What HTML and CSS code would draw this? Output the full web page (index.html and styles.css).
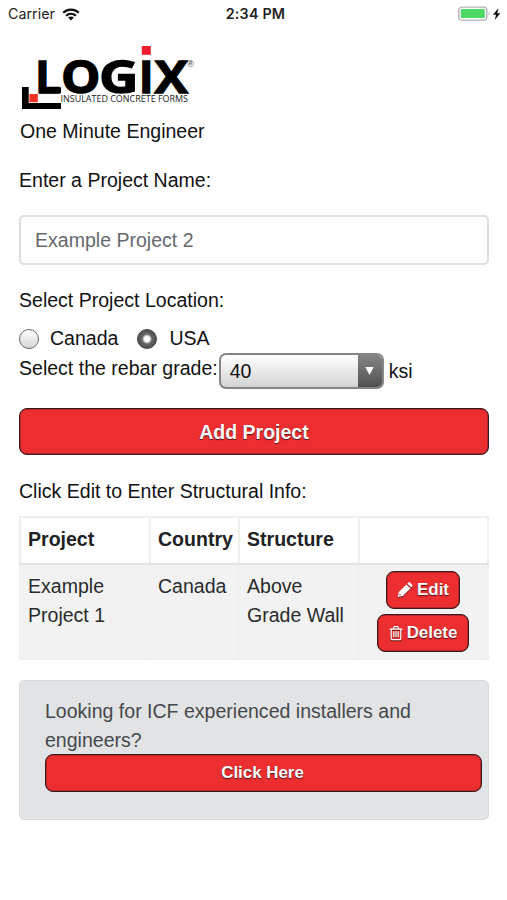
FILE: index.html
```html
<!DOCTYPE html>
<html lang="en">
<head>
<meta charset="utf-8">
<meta name="viewport" content="width=device-width">
<title>One Minute Engineer</title>
<link rel="stylesheet" href="styles.css">
</head>
<body>
<header class="status">
  <div class="carrier"><span>Carrier</span>
    <svg width="18" height="13" viewBox="0 0 18 13"><g fill="none" stroke="#111" stroke-width="2.1"><path d="M1.2 4.8C5.6.6 12.4.6 16.8 4.8"/><path d="M4 7.8c2.9-2.6 7.1-2.6 10 0"/></g><path d="M6.1 9.6c1.7-1.5 4.1-1.5 5.8 0L9 12.5z" fill="#111"/></svg>
  </div>
  <div class="clock">2:34 PM</div>
  <div class="power">
    <svg width="44" height="16" viewBox="0 0 44 16"><rect x=".8" y="1.1" width="28" height="13" rx="3.2" fill="#fff" stroke="#b3b3b3" stroke-width="1.4"/><rect x="2.8" y="3.1" width="24" height="9" rx=".8" fill="#4cd964"/><path d="M30.6 5.5q2 2-0 4.2z" fill="#aaa"/><path d="M40.5 2l-5.5 6.7h3l-1.2 5.4 5.5-6.8h-3z" fill="#111"/></svg>
  </div>
</header>
<main>
  <svg class="logo" width="176" height="66" viewBox="20 44 176 66" role="img" aria-label="Logix Insulated Concrete Forms">
    <path d="M22 87h6.7v16H61v6H22z" fill="#000"/>
    <path d="M40 87.3h21v6H40z" fill="#000"/>
    <path d="M29.4 94h8.4v8.2h-8.4z" fill="#f03022"/>
    <path d="M141.8 46h9v8.8h-9z" fill="#ed1c2e"/>
    <g class="wordmark">
      <text x="35" y="93">L</text>
      <text x="61" y="93" textLength="39.5" lengthAdjust="spacingAndGlyphs">O</text>
      <text x="99" y="93" textLength="39.5" lengthAdjust="spacingAndGlyphs">G</text>
      <text x="138.8" y="93">I</text>
      <text x="154.5" y="93" textLength="33.5" lengthAdjust="spacingAndGlyphs">X</text>
    </g>
    <text class="registered" x="187.2" y="67.2">®</text>
    <text class="tagline" x="60.5" y="102.4" textLength="127.5" lengthAdjust="spacingAndGlyphs">INSULATED CONCRETE FORMS</text>
  </svg>
  <h1>One Minute Engineer</h1>
  <label class="name-label" for="project">Enter a Project Name:</label>
  <input id="project" class="project" type="text" placeholder="Example Project 2">
  <p class="location">Select Project Location:</p>
  <div class="radios">
    <label><span class="radio"></span>Canada</label>
    <label><span class="radio checked"></span>USA</label>
  </div>
  <div class="grade">
    <span class="grade-label">Select the rebar grade:</span>
    <div class="select"><span class="value">40</span><span class="arrow"><svg width="9" height="8" viewBox="0 0 9 8"><path d="M.3 0h8.4L4.5 8z" fill="#fff"/></svg></span></div>
    <span class="unit">ksi</span>
  </div>
  <button class="btn add">Add Project</button>
  <p class="hint">Click Edit to Enter Structural Info:</p>
  <table>
    <colgroup><col class="c1"><col class="c2"><col class="c3"><col></colgroup>
    <thead><tr><th>Project</th><th>Country</th><th>Structure</th><th></th></tr></thead>
    <tbody><tr><td>Example Project 1</td><td>Canada</td><td>Above Grade&nbsp;Wall</td>
      <td><div class="actions">
        <button class="btn small edit"><svg width="16" height="16" viewBox="0 0 16 16"><path d="M.8 15l1-5 7.6-7.6 4 4-7.6 7.6zM10.3 1.6l.8-.8c.6-.6 1.5-.6 2.1 0l1.8 1.8c.6.6.6 1.5 0 2.1l-.8.8z" fill="#fff"/><path d="M2.3 13.5l.4-2 1.6 1.6z" fill="#e92d30"/></svg>Edit</button>
        <button class="btn small delete"><svg width="14" height="16" viewBox="0 0 14 16"><path d="M.5 4h13M4.5 3.7L5.3 1.5h3.4l.8 2.2M2.2 4v9.2q0 1.3 1.1 1.3h7.4q1.1 0 1.1-1.3V4M4.8 6.2v6M7 6.2v6M9.2 6.2v6" fill="none" stroke="#fff" stroke-width="1.25"/></svg>Delete</button>
      </div></td></tr></tbody>
  </table>
  <section class="callout">
    <p>Looking for ICF experienced installers and engineers?</p>
    <button class="btn small here">Click Here</button>
  </section>
</main>
</body>
</html>
```
FILE: styles.css
```css
* { box-sizing: border-box; }
body { margin: 0; background: #fff; color: #111; font: 19.55px/29px "Liberation Sans", Arial, sans-serif; }
p, h1 { margin: 0; }
svg { display: block; flex: none; }
.status { height: 28px; padding: 0 5px 0 8px; display: grid; grid-template-columns: 1fr auto 1fr; align-items: center; font: 14.3px/28px Inter, sans-serif; color: #222; }
.carrier { display: flex; align-items: center; gap: 7px; }
.clock { font-weight: 600; letter-spacing: .2px; margin-left: 1px; }
.power { display: flex; justify-content: flex-end; }
main { padding: 16px 18px 0 19px; display: flex; flex-direction: column; }
.logo { margin-left: 1px; }
.wordmark { font: 700 45px "Open Sans", sans-serif; fill: #000; stroke: #000; stroke-width: 1.3px; }
.registered { font: 9px "Liberation Sans", sans-serif; fill: #333; }
.tagline { font: 500 9px "Open Sans", sans-serif; fill: #222; }
h1 { font-size: 19.55px; font-weight: 400; line-height: 29px; margin: 7px 0 0 1px; }
.name-label { margin-top: 20px; }
.project { margin-top: 20px; height: 50px; width: 100%; padding: 1px 14px 0; border: 2px solid #dcdedf; border-radius: 5px; font: inherit; background: #fff; }
.project::placeholder { color: #65696e; opacity: 1; }
.location { margin-top: 21px; }
.radios { display: flex; gap: 19px; margin-top: 9px; height: 29px; }
.radios label { display: flex; align-items: center; gap: 11px; }
.radios label + label { gap: 12px; }
.radio { width: 20px; height: 20px; border: 1px solid #666; border-radius: 50%; background: linear-gradient(#fff, #d5d5d5); }
.radio.checked { border-color: #444; background: radial-gradient(circle, #fff 0 2.5px, #aaa 4px, #666 5px, #555 8px, #444); }
.grade { display: flex; height: 36px; }
.grade-label { margin-top: 1px; }
.select { width: 165px; height: 36px; margin-left: 1px; display: flex; border: 2px solid #858585; border-radius: 7px; overflow: hidden; background: linear-gradient(#fff, #d3d3d3); }
.value { flex: 1; padding: 2px 0 0 9px; }
.arrow { width: 24px; padding: 12px 0 0 7px; background: linear-gradient(#858585, #515151); }
.unit { margin: 4px 0 0 5px; }
.btn { display: flex; align-items: center; justify-content: center; padding: 0; border: 1.5px solid #3d1a1c; border-radius: 8px; background: #ec2e31; color: #fff; font: bold 19.5px/24px "Liberation Sans", Arial, sans-serif; text-shadow: 0 1px 1px #4a1515; box-shadow: inset 0 0 0 .5px #7c2022; }
.btn svg { filter: drop-shadow(0 1px 0 #621818); }
.add { margin-top: 19px; height: 47px; }
.hint { margin-top: 22px; }
table { width: 470px; margin-top: 10px; table-layout: fixed; border-collapse: collapse; color: #292b2d; }
.c1 { width: 130px; } .c2 { width: 89px; } .c3 { width: 120px; }
th, td { padding: 7px 0 0 7px; text-align: left; vertical-align: top; border: 2px solid #eeefef; }
th { height: 47px; border-bottom-color: #e1e4e6; color: #202224; }
td { height: 95px; background: #f2f2f2; border-color: #f0f0f1; }
.actions { display: flex; flex-direction: column; align-items: center; gap: 5px; margin: -1px 8px 0 0; }
.small { height: 38px; font-size: 16.9px; line-height: 22px; }
.edit { width: 74px; gap: 4px; }
.delete { width: 92px; gap: 4px; }
.callout { width: 470px; height: 140px; margin-top: 20px; padding: 16px 7px 0 25px; background: #e2e3e5; border: 1px solid #d8dadc; border-radius: 5px; color: #45484b; }
.here { width: 437px; margin-top: -1px; padding-right: 2px; }
```
